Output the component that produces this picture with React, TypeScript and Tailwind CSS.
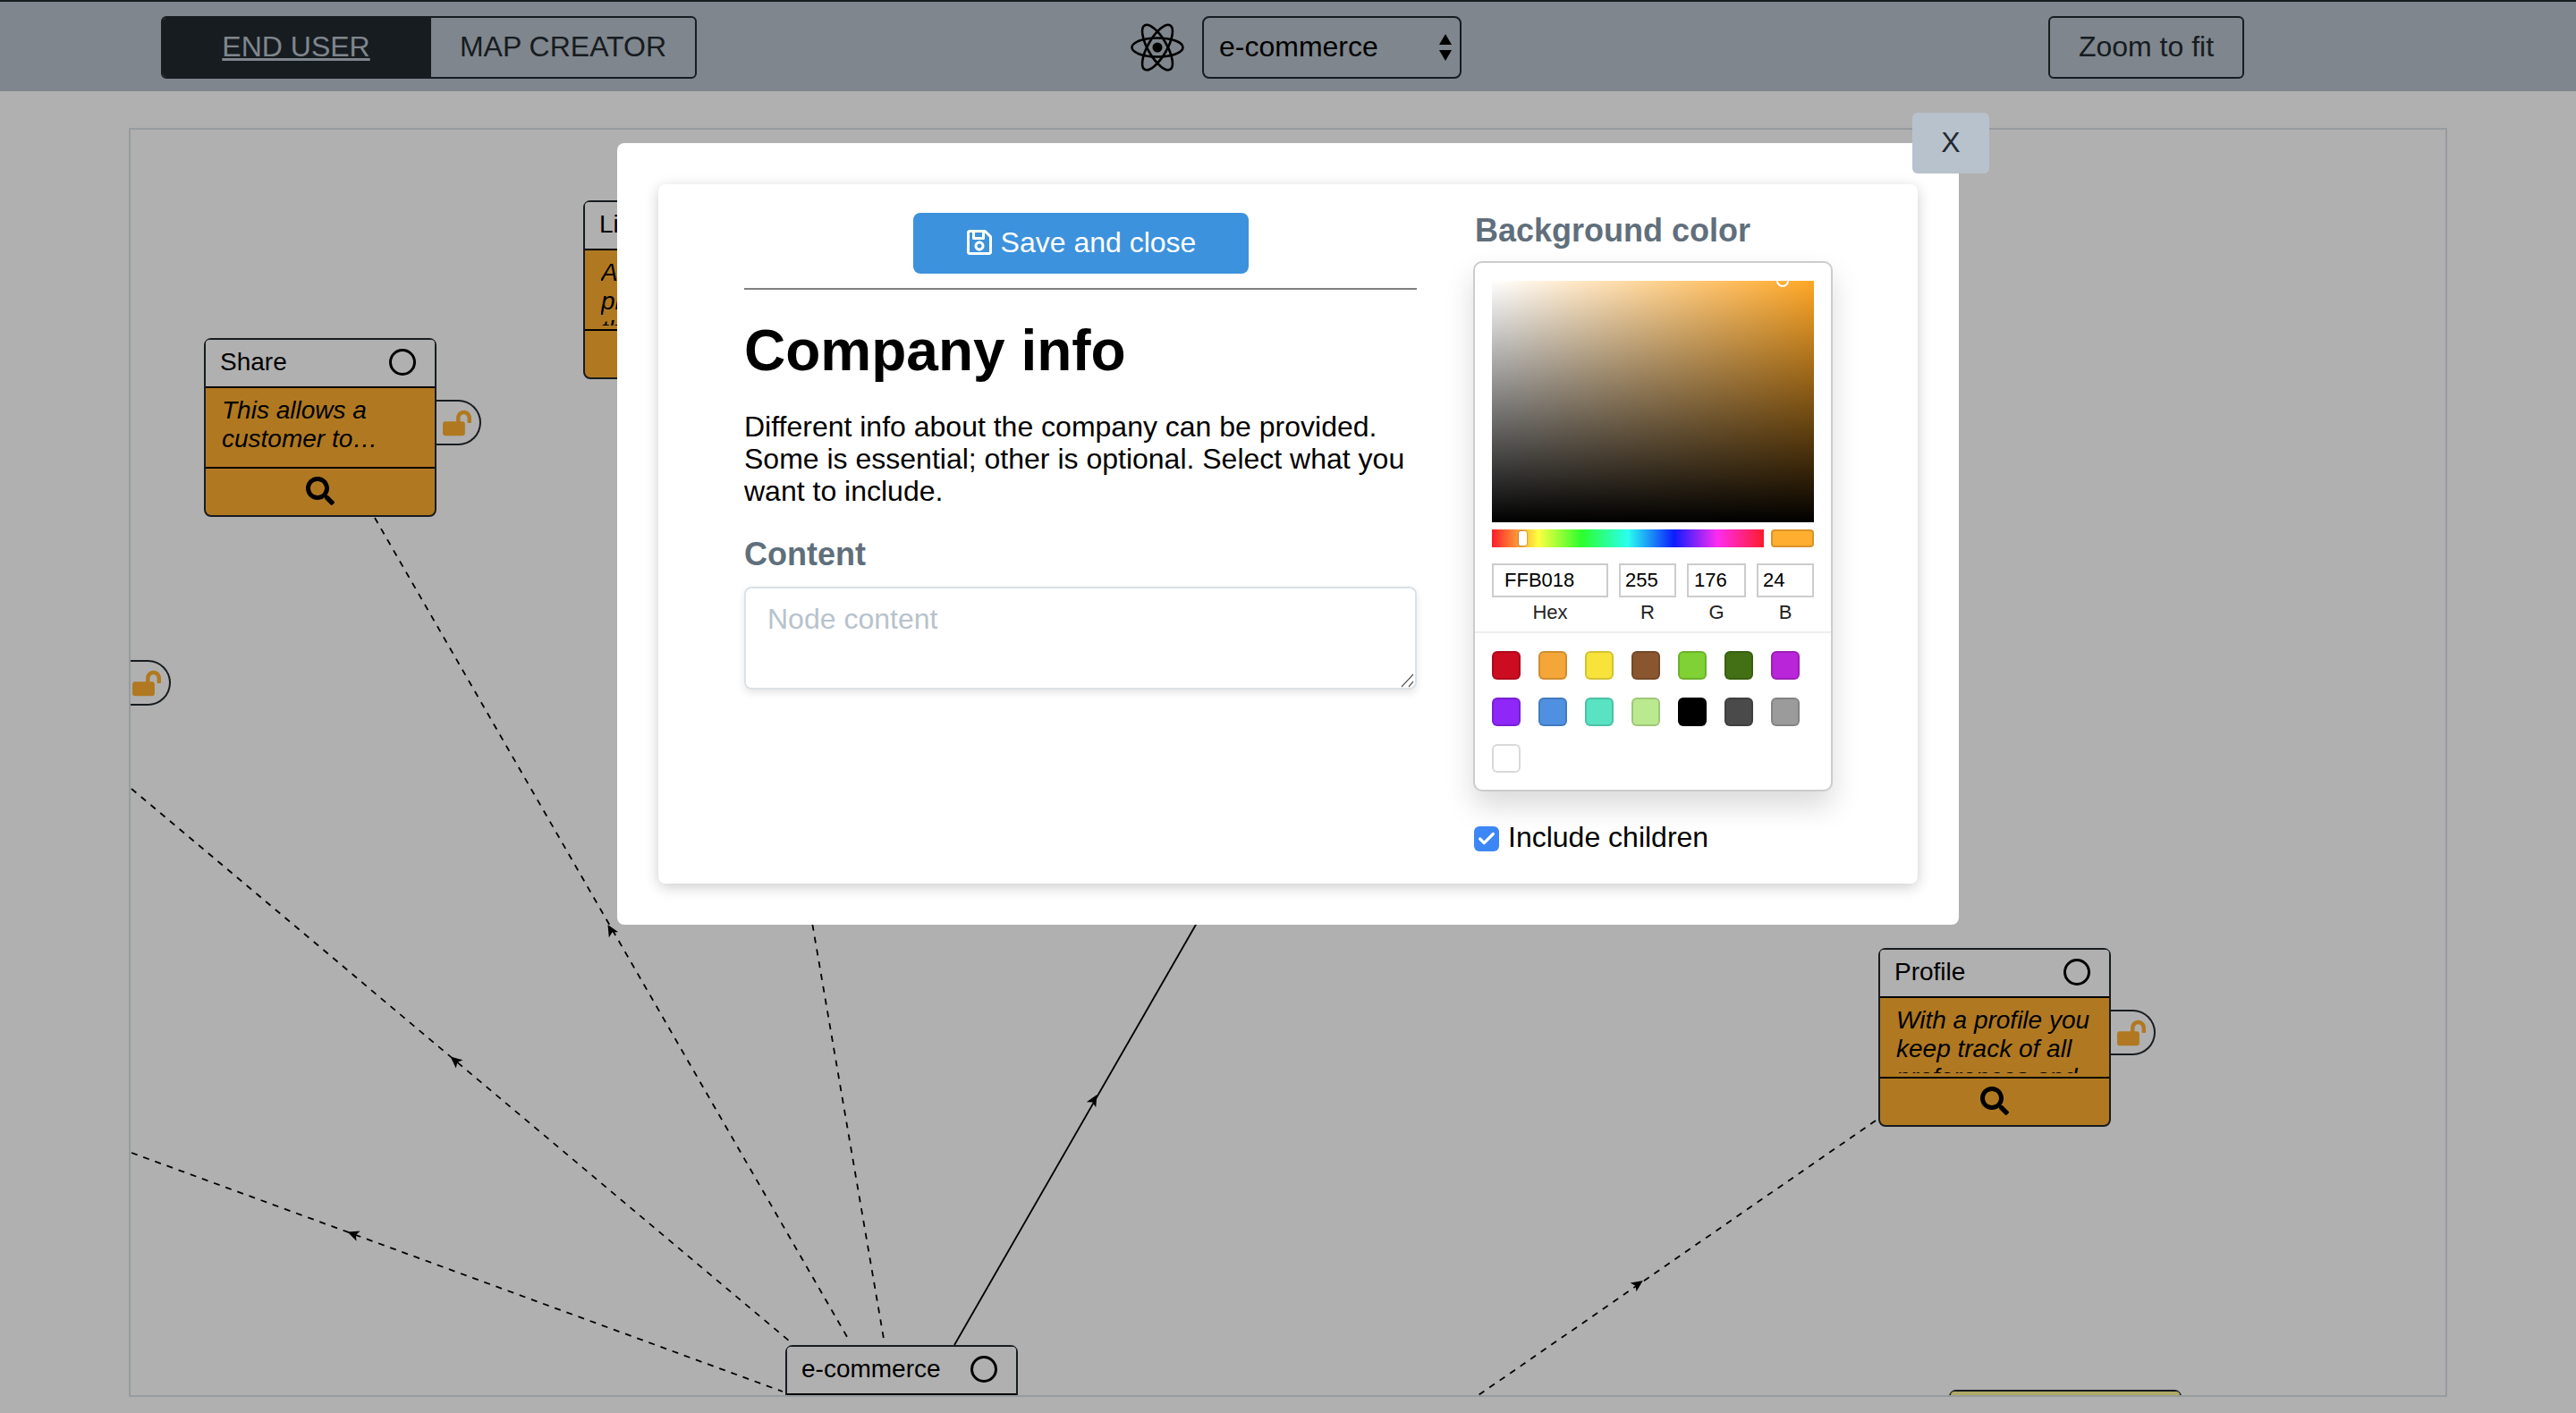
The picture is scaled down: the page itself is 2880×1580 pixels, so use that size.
import { FaLockOpen, FaRegSave, FaSearch } from "react-icons/fa"
import { Check } from "lucide-react"

const SWATCHES = [
  "#CC0C20", "#F5A638", "#F8E33B", "#895630", "#80D134", "#437014", "#B925D8",
  "#8E27F8", "#4F91E0", "#59E3C2", "#BBE98F", "#000000", "#4A4A4A", "#9B9B9B",
  "#FFFFFF",
]

// page coordinates, the svg viewBox lines up with the canvas
const EDGES = [
  { x1: 419, y1: 579, x2: 950, y2: 1500, ax: 683, ay: 1040, dashed: true },
  { x1: 147, y1: 882, x2: 883, y2: 1500, ax: 509, ay: 1186, dashed: true },
  { x1: 147, y1: 1289, x2: 875, y2: 1556, ax: 395, ay: 1380, dashed: true },
  { x1: 906, y1: 1020, x2: 988, y2: 1497, dashed: true },
  { x1: 1345, y1: 1020, x2: 1067, y2: 1504, ax: 1223, ay: 1230, dashed: false },
  { x1: 2097, y1: 1253, x2: 1653, y2: 1560, ax: 1831, ay: 1436, dashed: true },
]

function Edges() {
  return (
    <svg className="absolute inset-0 w-full h-full" viewBox="146 145 2588 1415">
      {EDGES.map((e, i) => {
        const angle = (Math.atan2(e.y1 - e.y2, e.x1 - e.x2) * 180) / Math.PI
        return (
          <g key={i}>
            <line
              x1={e.x1}
              y1={e.y1}
              x2={e.x2}
              y2={e.y2}
              stroke="#000"
              strokeWidth={1.8}
              strokeDasharray={e.dashed ? "7 7" : undefined}
            />
            {e.ax !== undefined && (
              <polygon
                points="7,0 -6,-6 -3,0 -6,6"
                fill="#000"
                transform={`translate(${e.ax} ${e.ay}) rotate(${angle})`}
              />
            )}
          </g>
        )
      })}
    </svg>
  )
}

interface NodeProps {
  title: string
  text: string
  className: string
  headerClassName?: string
}

function MapNode({ title, text, className, headerClassName = "bg-white" }: NodeProps) {
  return (
    <div className={`absolute w-[260px] h-[200px] border-2 border-[#22292f] rounded-[8px] flex flex-col ${className}`}>
      <div className={`h-[54px] shrink-0 rounded-t-[4px] border-b-2 border-black flex items-center justify-between pl-[16px] pr-[21px] pb-[2px] ${headerClassName}`}>
        <span className="text-[28px] text-black">{title}</span>
        <span className="w-[30px] h-[30px] rounded-full border-[3px] border-black" />
      </div>
      <div className="h-[90px] shrink-0 border-b-2 border-black pl-[18px] pr-[8px] pt-[9px]">
        <div className="h-[75px] overflow-hidden text-[28px] leading-[32px] italic text-black">{text}</div>
      </div>
      <div className="flex-1 flex items-center justify-center text-black pb-[2px]">
        <FaSearch size={32} />
      </div>
      <div className="absolute left-[calc(100%+2px)] top-[67px] w-[50px] h-[51px] border-2 border-l-0 border-[#22292f] rounded-r-full bg-white flex items-center pl-[7px] text-[#ffb030]">
        <FaLockOpen size={32} />
      </div>
    </div>
  )
}

function ColorPicker() {
  return (
    <div className="w-[402px] h-[593px] bg-white border-2 border-[#cccccc] rounded-[10px] shadow-[0_16px_32px_rgba(0,0,0,0.15)]">
      <div className="pt-[20px] px-[19px]">
        <div className="relative w-[360px] h-[270px] overflow-hidden bg-[#ffa726]">
          <div className="absolute inset-0 bg-[linear-gradient(to_right,#fff,rgba(255,255,255,0))]" />
          <div className="absolute inset-0 bg-[linear-gradient(to_top,#000,rgba(0,0,0,0))]" />
          <div className="absolute left-[318px] -top-[7px] w-[14px] h-[14px] rounded-full border-2 border-white" />
        </div>
        <div className="flex justify-between mt-[8px]">
          <div className="relative w-[304px] h-[20px] bg-[linear-gradient(to_right,#fc1c2b_0%,#feff40_17%,#2cff2c_33%,#2afff0_50%,#0c1cff_67%,#ff2cf0_83%,#fc1c2b_100%)]">
            <div className="absolute left-[30px] top-[2px] w-[9px] h-[16px] bg-white rounded-[2px] shadow-[0_0_2px_rgba(0,0,0,0.6)]" />
          </div>
          <div className="w-[48px] h-[20px] rounded-[4px] bg-[#ffae30] shadow-[inset_0_0_0_2px_rgba(0,0,0,0.15)]" />
        </div>
        <div className="flex mt-[18px] text-[22px]">
          <PickerField label="Hex" value="FFB018" className="w-[130px] mr-[12px]" inputClassName="pl-[12px]" />
          <PickerField label="R" value="255" className="w-[64px] mr-[12px]" inputClassName="pl-[5px]" />
          <PickerField label="G" value="176" className="w-[66px] mr-[12px]" inputClassName="pl-[6px]" />
          <PickerField label="B" value="24" className="w-[64px]" inputClassName="pl-[5px]" />
        </div>
      </div>
      <div className="mt-[8px] border-t-2 border-[#eeeeee] pt-[20px] pl-[19px]">
        <div className="grid grid-cols-[repeat(7,32px)] gap-x-[20px] gap-y-[20px]">
          {SWATCHES.map((color) => (
            <div
              key={color}
              className="w-[32px] h-[32px] rounded-[6px] shadow-[inset_0_0_0_2px_rgba(0,0,0,0.15)]"
              style={{ backgroundColor: color }}
            />
          ))}
        </div>
      </div>
    </div>
  )
}

function PickerField({ label, value, className, inputClassName }: { label: string; value: string; className: string; inputClassName: string }) {
  return (
    <div className={className}>
      <input
        readOnly
        value={value}
        className={`w-full h-[38px] border-2 border-[#cccccc] text-black text-[22px] outline-none ${inputClassName}`}
      />
      <div className="text-center text-[22px] leading-[26px] mt-[4px] text-[#222222]">{label}</div>
    </div>
  )
}

function Modal() {
  return (
    <div className="relative w-[1500px] h-[874px] bg-white rounded-[8px] p-[46px]">
      <button className="absolute -right-[34px] -top-[34px] w-[86px] h-[68px] pb-[2px] bg-[#b8c2cc] rounded-[6px] text-[32px] text-[#22292f]">
        X
      </button>
      <div className="h-[782px] rounded-[8px] bg-white shadow-[0_4px_16px_rgba(0,0,0,0.2)] flex pl-[96px] pt-[32px]">
        <div className="w-[752px]">
          <div className="flex justify-center">
            <button className="w-[375px] h-[68px] pb-[2px] bg-[#3c92dc] text-white rounded-[8px] text-[32px] flex items-center justify-center gap-[8px]">
              <FaRegSave size={32} />
              Save and close
            </button>
          </div>
          <hr className="mt-[16px] border-t-2 border-[#808080]" />
          <h1 className="mt-[32px] text-[64px] leading-[72px] font-bold text-black">Company info</h1>
          <p className="mt-[31px] text-[32px] leading-[36px] text-black">
            Different info about the company can be provided. Some is essential; other is optional. Select what you want to include.
          </p>
          <h2 className="mt-[33px] text-[36px] leading-[40px] font-bold text-[#606f7b]">Content</h2>
          <div className="relative mt-[16px]">
            <textarea
              placeholder="Node content"
              className="block w-full h-[115px] border-2 border-[#dae1e7] rounded-[8px] px-[24px] py-[16px] text-[32px] leading-[36px] outline-none resize-none shadow-[0_4px_8px_rgba(0,0,0,0.1)] placeholder:text-[#b8c2cc]"
            />
            <svg className="absolute right-[2px] bottom-[2px]" width="16" height="16" viewBox="0 0 16 16" stroke="#555" strokeWidth="1.2">
              <line x1="1" y1="15" x2="14" y2="1" />
              <line x1="9" y1="15" x2="14" y2="9" />
            </svg>
          </div>
        </div>
        <div className="ml-[63px]">
          <h2 className="text-[36px] leading-[40px] font-bold text-[#606f7b] ml-[2px]">Background color</h2>
          <div className="mt-[14px]">
            <ColorPicker />
          </div>
          <label className="mt-[33px] flex items-center gap-[10px] text-[32px] leading-[36px] text-black ml-[1px]">
            <span className="w-[28px] h-[28px] mt-[4px] rounded-[6px] bg-[#3d86f5] flex items-center justify-center text-white">
              <Check size={22} strokeWidth={3.5} />
            </span>
            Include children
          </label>
        </div>
      </div>
    </div>
  )
}

export default function App() {
  return (
    <div className="relative w-[2880px] h-[1580px] bg-white overflow-hidden font-['Liberation_Sans',Arial,sans-serif]">
      <header className="h-[102px] bg-[#b8c2cc] border-t-2 border-[#22292f] flex items-center pl-[180px] pt-[2px]">
        <div className="flex w-[599px] h-[70px] border-2 border-[#22292f] rounded-[6px] overflow-hidden text-[32px]">
          <div className="w-[300px] pb-[3px] bg-[#22292f] text-[#b8c2cc] underline flex items-center justify-center pr-[2px]">END USER</div>
          <div className="flex-1 pb-[3px] text-[#22292f] flex items-center justify-center">MAP CREATOR</div>
        </div>
        <svg className="ml-[485px]" width="60" height="54" viewBox="-30 -27 60 54" fill="none" stroke="#000" strokeWidth="2.6">
          <ellipse rx="28.5" ry="10.5" />
          <ellipse rx="28.5" ry="10.5" transform="rotate(60)" />
          <ellipse rx="28.5" ry="10.5" transform="rotate(120)" />
          <circle r="5.5" fill="#000" stroke="none" />
        </svg>
        <div className="relative ml-[20px] w-[290px] h-[70px]">
          <select className="appearance-none w-full h-full pb-[3px] bg-transparent border-2 border-[#22292f] rounded-[8px] pl-[17px] text-[32px] text-black outline-none">
            <option>e-commerce</option>
          </select>
          <svg className="absolute left-[264px] top-[20px]" width="16" height="30" viewBox="0 0 16 30" fill="#000">
            <polygon points="8,0 15,12 1,12" />
            <polygon points="8,30 15,18 1,18" />
          </svg>
        </div>
        <button className="ml-[656px] w-[219px] h-[70px] pb-[3px] border-2 border-[#22292f] rounded-[6px] text-[32px] text-[#22292f]">
          Zoom to fit
        </button>
      </header>

      <div className="relative ml-[144px] mt-[41px] w-[2592px] h-[1419px] border-2 border-[#dae1e7] overflow-hidden">
        <Edges />
        <MapNode className="left-[82px] top-[233px] bg-[#ffb030]" title="Share" text="This allows a customer to…" />
        <MapNode className="left-[506px] top-[79px] bg-[#ffb030]" title="Link" text="A link to the product page of the item" />
        <MapNode className="-left-[265px] top-[524px] bg-[#ffb030]" title="" text="" />
        <MapNode className="left-[1954px] top-[915px] bg-[#ffb030]" title="Profile" text="With a profile you keep track of all preferences and" />
        <MapNode className="left-[732px] top-[1359px] bg-[#ffb030]" title="e-commerce" text="" />
        <MapNode className="left-[2033px] top-[1409px] bg-[#fff396]" headerClassName="bg-[#fff396]" title="" text="" />
      </div>

      <div className="absolute inset-0 bg-[#0000004f] flex justify-center items-start pt-[160px]">
        <Modal />
      </div>
    </div>
  )
}
